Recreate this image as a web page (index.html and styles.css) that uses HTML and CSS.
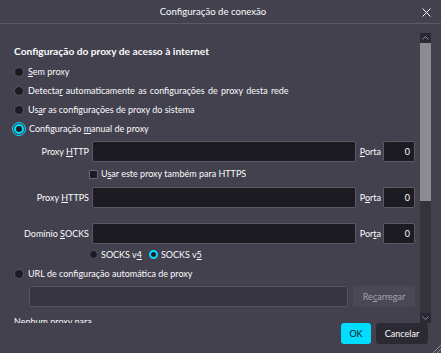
FILE: index.html
```html
<!DOCTYPE html>
<html lang="pt-BR">
<head>
<meta charset="utf-8">
<title>Configuração de conexão</title>
<link rel="stylesheet" href="styles.css">
</head>
<body>
<div class="dialog">
  <header class="titlebar">
    <span class="title">Configuração de conexão</span>
    <svg class="close" width="9" height="9" viewBox="0 0 9 9"><path d="M0.5 0.5 L8.5 8.5 M8.5 0.5 L0.5 8.5" stroke="#fbfbfe" stroke-width="1" fill="none"/></svg>
  </header>
  <div class="main">
    <div class="pane">
      <h1 class="heading">Configuração do proxy de acesso à internet</h1>
      <div class="radio-row"><span class="radio"></span><span><u>S</u>em proxy</span></div>
      <div class="radio-row"><span class="radio"></span><span class="wide">Detecta<u>r</u> automaticamente as configurações de proxy desta rede</span></div>
      <div class="radio-row"><span class="radio"></span><span>Us<u>a</u>r as configurações de proxy do sistema</span></div>
      <div class="radio-row"><span class="radio checked focused"></span><span>Configuração <u>m</u>anual de proxy</span></div>

      <div class="field-row first">
        <span class="field-label">Proxy <u>H</u>TTP</span>
        <div class="input"></div>
        <span class="port-label"><u>P</u>orta</span>
        <div class="port">0</div>
      </div>
      <div class="check-row"><span class="checkbox"></span><span>U<u>s</u>ar este proxy também para HTTPS</span></div>
      <div class="field-row https">
        <span class="field-label">Proxy <u>H</u>TTPS</span>
        <div class="input"></div>
        <span class="port-label">P<u>o</u>rta</span>
        <div class="port">0</div>
      </div>
      <div class="field-row socks">
        <span class="field-label">Domínio <u>S</u>OCKS</span>
        <div class="input"></div>
        <span class="port-label">Por<u>t</u>a</span>
        <div class="port">0</div>
      </div>
      <div class="socks-row">
        <span class="radio small"></span><span class="socks-label">SOCKS v<u>4</u></span>
        <span class="radio small checked"></span><span>SOCKS v<u>5</u></span>
      </div>
      <div class="radio-row url"><span class="radio"></span><span>URL de configuração automática de proxy</span></div>
      <div class="url-row">
        <div class="input disabled"></div>
        <span class="btn-reload">Re<u>c</u>arregar</span>
      </div>
      <div class="noproxy">Nenhum proxy para</div>
    </div>
    <div class="scrollbar">
      <div class="sb-btn"><svg width="7" height="4" viewBox="0 0 7 4"><path d="M0.5 3.5 L3.5 0.5 L6.5 3.5" stroke="#8f8f9d" fill="none"/></svg></div>
      <div class="sb-thumb"></div>
      <div class="sb-track"></div>
      <div class="sb-btn"><svg width="7" height="4" viewBox="0 0 7 4"><path d="M0.5 0.5 L3.5 3.5 L6.5 0.5" stroke="#8f8f9d" fill="none"/></svg></div>
    </div>
  </div>
  <footer class="footer">
    <button class="btn primary">OK</button>
    <button class="btn">Cancelar</button>
    <svg class="grip" width="9" height="9" viewBox="0 0 9 9"><path d="M9 1 L1 9 M9 5 L5 9" stroke="#8f8f9d" stroke-width="1" fill="none"/></svg>
  </footer>
</div>
</body>
</html>
```

FILE: styles.css
```css
* { box-sizing: border-box; }
html, body { margin: 0; padding: 0; }
body {
  width: 441px;
  height: 353px;
  overflow: hidden;
  background: #42414d;
  color: #fbfbfe;
  font-family: "Lato", "Open Sans", sans-serif;
  font-size: 9px;
  line-height: 12px;
}
u { text-decoration: underline; text-underline-offset: 1px; }
.dialog { display: flex; flex-direction: column; height: 353px; position: relative; }

.titlebar {
  height: 24px;
  border-bottom: 1px solid #5b5a64;
  display: flex;
  align-items: center;
  justify-content: center;
  padding-right: 15px;
  position: relative;
  flex: none;
}
.title { font-size: 9.6px; }
.close { position: absolute; right: 10px; top: 8px; }

.main {
  margin-top: 9px;
  height: 290px;
  display: flex;
  flex: none;
}
.pane {
  flex: 1;
  overflow: hidden;
  padding: 0 5px 0 14px;
}
.heading {
  margin: 11px 0 0;
  font-size: 10.2px;
  line-height: 14px;
  font-weight: 700;
}
.radio-row {
  height: 19px;
  display: flex;
  align-items: center;
  gap: 4px;
}
.wide { word-spacing: 1px; }
.heading + .radio-row { margin-top: 4px; }
.radio {
  width: 10px;
  height: 10px;
  border-radius: 50%;
  background: #1c1b22;
  border: 1px solid #55545e;
  flex: none;
}
.radio.small { width: 9px; height: 9px; }
.radio.checked {
  border: 2.5px solid #00ddff;
  background: #1c1b22;
}
.radio.focused {
  width: 10px;
  height: 10px;
  outline: 1.5px solid #00ddff;
  outline-offset: 1px;
  margin-right: 1px;
}

.field-row {
  display: flex;
  align-items: center;
  height: 21px;
}
.field-row.first { margin-top: 3px; }
.field-row.https { margin-top: 4px; }
.field-row.socks { margin-top: 15px; }
.field-label {
  width: 75px;
  text-align: right;
  margin-right: 3px;
  flex: none;
}
.input {
  flex: 1;
  height: 21px;
  background: #1c1b22;
  border: 1px solid #5b5a64;
  border-radius: 2px;
}
.port-label { margin: 0 2px 0 4px; flex: none; }
.port {
  width: 32px;
  height: 21px;
  flex: none;
  background: #1c1b22;
  border: 1px solid #5b5a64;
  border-radius: 2px;
  text-align: right;
  padding-right: 4px;
  line-height: 19px;
}

.check-row {
  height: 18px;
  margin-top: 3px;
  padding-left: 75px;
  display: flex;
  align-items: center;
  gap: 3px;
}
.checkbox {
  width: 9px;
  height: 9px;
  background: #1c1b22;
  border: 1px solid #6b6a75;
  border-radius: 1px;
  flex: none;
}

.socks-row {
  height: 19px;
  margin-top: 1px;
  padding-left: 75px;
  display: flex;
  align-items: center;
  gap: 3px;
}
.socks-label { margin-right: 4px; }

.url-row {
  display: flex;
  align-items: center;
  gap: 5px;
  margin-top: 3px;
  padding-left: 15px;
  height: 21px;
}
.input.disabled {
  background: #373640;
  border-color: #55545e;
}
.btn-reload {
  width: 62px;
  height: 21px;
  flex: none;
  background: #4a4953;
  color: #a3a2ab;
  border-radius: 2px;
  display: flex;
  align-items: center;
  justify-content: center;
}
.noproxy { margin-top: 9px; }

.scrollbar {
  width: 11px;
  margin-right: 10px;
  display: flex;
  flex-direction: column;
  flex: none;
  background: #2f2e37;
}
.sb-btn {
  height: 10px;
  display: flex;
  align-items: center;
  justify-content: center;
  background: #2b2a33;
  flex: none;
}
.sb-thumb { height: 158px; background: #8c8b94; flex: none; }
.sb-track { flex: 1; background: #34333c; }

.footer {
  display: flex;
  justify-content: flex-end;
  gap: 5px;
  padding-right: 13px;
  height: 21px;
  flex: none;
}
.btn {
  height: 21px;
  border: none;
  border-radius: 3px;
  font-family: inherit;
  font-size: 9px;
  padding: 0;
  background: #2b2a33;
  color: #fbfbfe;
  width: 52px;
}
.btn.primary { background: #00ddff; color: #15141a; width: 30px; }
.grip { position: absolute; right: 0; bottom: 0; }
```
